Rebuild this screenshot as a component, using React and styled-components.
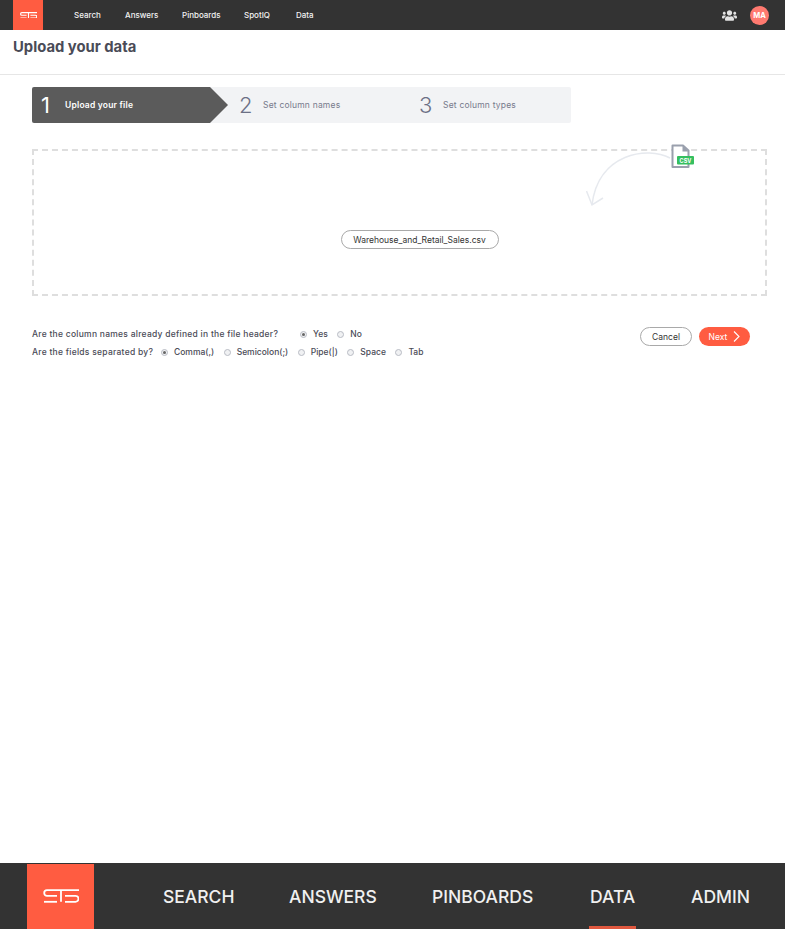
import styled, { createGlobalStyle } from "styled-components";
import { FaUsers } from "react-icons/fa";

const NAV_ITEMS = [
    { label: "Search", width: 51 },
    { label: "Answers", width: 57 },
    { label: "Pinboards", width: 62 },
    { label: "SpotIQ", width: 52 },
    { label: "Data", width: 40 },
];

const BOTTOM_ITEMS = [
    { label: "SEARCH", width: 126 },
    { label: "ANSWERS", width: 143 },
    { label: "PINBOARDS", width: 158 },
    { label: "DATA", width: 101, active: true },
    { label: "ADMIN", width: 70 },
];

const STEPS = [
    { number: 1, label: "Upload your file", width: 196, active: true },
    { number: 2, label: "Set column names", width: 180 },
    { number: 3, label: "Set column types", width: 179 },
];

const HEADER_OPTIONS = [
    { label: "Yes", checked: true },
    { label: "No" },
];

const SEPARATOR_OPTIONS = [
    { label: "Comma(,)", checked: true },
    { label: "Semicolon(;)" },
    { label: "Pipe(|)" },
    { label: "Space" },
    { label: "Tab" },
];

// logo mark, three linked strokes
const Logo = ({ width, stroke }) => (
    <svg width={width} height={width * 0.39} viewBox="0 0 36 14" fill="none" stroke="#fff" strokeWidth={stroke}>
        <path d="M36 1.200H4a2.800 2.800 0 0 0 0 5.600H14" />
        <path d="M1 12.800H14" />
        <path d="M18 1.200V12.800" />
        <path d="M22 6.800H32.500a3 3 0 0 1 0 6H22" />
    </svg>
);

const Options = ({ options }) =>
    options.map((option) => (
        <Option key={option.label}>
            <Radio $checked={option.checked} />
            {option.label}
        </Option>
    ));

const App = () => {
    return (
        <Page>
            <GlobalStyle />
            <TopBar>
                <LogoTile>
                    <Logo width={17} stroke={2.4} />
                </LogoTile>
                <TopNav>
                    {NAV_ITEMS.map((item) => (
                        <TopLink key={item.label} $width={item.width}>
                            {item.label}
                        </TopLink>
                    ))}
                </TopNav>
                <UserArea>
                    <FaUsers size={15} color="#e4e4e4" />
                    <Avatar>MA</Avatar>
                </UserArea>
            </TopBar>

            <TitleBar>
                <h1>Upload your data</h1>
            </TitleBar>

            <Main>
                <Stepper>
                    {STEPS.map((step) => (
                        <Step key={step.number} $width={step.width} $active={step.active}>
                            <StepNumber $active={step.active}>{step.number}</StepNumber>
                            <StepLabel $active={step.active}>{step.label}</StepLabel>
                        </Step>
                    ))}
                </Stepper>

                <DropZone>
                    <FilePill>Warehouse_and_Retail_Sales.csv</FilePill>
                    <DropArrow width="86" height="60" viewBox="0 0 86 60" fill="none" stroke="#e6e9ee" strokeWidth="1.500">
                        <path d="M84 9C62 -3 12 4 6 56" />
                        <path d="M.500 42L6 56L17 49" />
                    </DropArrow>
                    <FileIcon width="23" height="25" viewBox="0 0 23 25">
                        <path d="M1.500 1.500H12L17.500 6.500V23H1.500Z" fill="#fff" stroke="#9aa0ad" strokeWidth="2" strokeLinejoin="round" />
                        <path d="M11.500 1.500V7.500H17.500Z" fill="#9aa0ad" />
                        <rect x="6" y="12" width="17" height="8.500" rx="1" fill="#35bf5f" />
                        <CsvText x="14.500" y="18.500">CSV</CsvText>
                    </FileIcon>
                </DropZone>

                <FormArea>
                    <Questions>
                        <QuestionRow>
                            <QuestionText $width={268}>Are the column names already defined in the file header?</QuestionText>
                            <Options options={HEADER_OPTIONS} />
                        </QuestionRow>
                        <QuestionRow>
                            <QuestionText $width={129}>Are the fields separated by?</QuestionText>
                            <Options options={SEPARATOR_OPTIONS} />
                        </QuestionRow>
                    </Questions>
                    <Actions>
                        <CancelButton>Cancel</CancelButton>
                        <NextButton>
                            Next
                            <svg width="7" height="11" viewBox="0 0 7 11" fill="none" stroke="#fff" strokeWidth="1.100">
                                <path d="M1 .5L6 5.500L1 10.500" />
                            </svg>
                        </NextButton>
                    </Actions>
                </FormArea>
            </Main>

            <BottomBar>
                <BottomLogoTile>
                    <Logo width={36} stroke={1.8} />
                </BottomLogoTile>
                <BottomNav>
                    {BOTTOM_ITEMS.map((item) => (
                        <BottomLink key={item.label} $width={item.width} $active={item.active}>
                            {item.label}
                        </BottomLink>
                    ))}
                </BottomNav>
            </BottomBar>
        </Page>
    );
};

export default App;

const GlobalStyle = createGlobalStyle`
    * {
        box-sizing: border-box;
    }
    body {
        margin: 0;
        background-color: #fff;
        font-family: "Inter", "Liberation Sans", sans-serif;
    }
`;

const Page = styled.div`
    display: flex;
    flex-direction: column;
    height: 929px;
    overflow: hidden;
`;

const TopBar = styled.header`
    display: flex;
    align-items: center;
    height: 30px;
    padding-left: 13px;
    background-color: #333333;
`;

const LogoTile = styled.div`
    display: flex;
    align-items: center;
    justify-content: center;
    width: 30px;
    height: 30px;
    background-color: #ff5c41;
`;

const TopNav = styled.nav`
    display: flex;
    margin-left: 31px;
`;

const TopLink = styled.a`
    width: ${(props) => props.$width}px;
    color: #f2f2f2;
    font-size: 8px;
    font-weight: 500;
`;

const UserArea = styled.div`
    display: flex;
    align-items: center;
    gap: 13px;
    margin-left: auto;
    margin-right: 16px;
`;

const Avatar = styled.div`
    display: flex;
    align-items: center;
    justify-content: center;
    width: 19px;
    height: 19px;
    border-radius: 50%;
    background-color: #ff7a70;
    color: #fff;
    font-size: 7.500px;
    font-weight: 700;
`;

const TitleBar = styled.div`
    height: 45px;
    padding: 8px 13px 0;
    border-bottom: 1px solid #e6e6e6;
    h1 {
        margin: 0;
        color: #4a4b57;
        font-size: 14.800px;
        line-height: 19px;
        font-weight: 700;
    }
`;

const Main = styled.main`
    flex: 1;
    display: flex;
    flex-direction: column;
    padding: 12px 18px 0 32px;
`;

const Stepper = styled.div`
    display: flex;
    width: 539px;
    height: 36px;
    background-color: #f2f3f5;
    border-radius: 2px;
`;

const Step = styled.div`
    display: flex;
    align-items: center;
    width: ${(props) => props.$width}px;
    padding-left: ${(props) => (props.$active ? "9px" : "27px")};
    background-color: ${(props) => (props.$active ? "#5b5b5b" : "transparent")};
    clip-path: ${(props) => (props.$active ? "polygon(0 0, 178px 0, 196px 50%, 178px 100%, 0 100%)" : "none")};
    margin-right: ${(props) => (props.$active ? "-16px" : "0")};
    border-radius: ${(props) => (props.$active ? "2px" : "0")};
`;

const StepNumber = styled.span`
    width: 24px;
    color: ${(props) => (props.$active ? "#fff" : "#6c7086")};
    font-size: 22px;
    font-weight: ${(props) => (props.$active ? 400 : 300)};
`;

const StepLabel = styled.span`
    color: ${(props) => (props.$active ? "#fff" : "#777a8c")};
    font-size: 8.500px;
    font-weight: ${(props) => (props.$active ? 600 : 400)};
    letter-spacing: 0.2px;
`;

const DropZone = styled.div`
    position: relative;
    display: flex;
    align-items: center;
    justify-content: center;
    width: 735px;
    height: 147px;
    margin-top: 26px;
    padding-left: 40px;
    padding-bottom: 3px;
    border: 2px dashed #dedede;
`;

const FilePill = styled.div`
    display: flex;
    align-items: center;
    justify-content: center;
    width: 158px;
    height: 19px;
    margin-top: 37px;
    border: 1px solid #a9a9a9;
    border-radius: 10px;
    color: #333;
    font-size: 8.500px;
`;

const DropArrow = styled.svg`
    position: absolute;
    top: -2px;
    left: 552px;
`;

const FileIcon = styled.svg`
    position: absolute;
    top: -7px;
    left: 637px;
`;

const CsvText = styled.text`
    fill: #fff;
    font-size: 5.500px;
    font-weight: 700;
    text-anchor: middle;
`;

const FormArea = styled.div`
    display: flex;
    justify-content: space-between;
    margin-top: 30px;
`;

const Questions = styled.div`
    display: flex;
    flex-direction: column;
    gap: 6px;
    padding-top: 2px;
`;

const QuestionRow = styled.div`
    display: flex;
    align-items: center;
    height: 12px;
    color: #4a4b57;
    font-size: 8.500px;
    font-weight: 500;
`;

const QuestionText = styled.span`
    width: ${(props) => props.$width}px;
    letter-spacing: 0.26px;
    white-space: nowrap;
`;

const Option = styled.label`
    display: flex;
    align-items: center;
    gap: 6px;
    margin-right: 9.500px;
    white-space: nowrap;
`;

const Radio = styled.span`
    display: flex;
    align-items: center;
    justify-content: center;
    width: 7px;
    height: 7px;
    border: 1px solid #b9bcc4;
    border-radius: 50%;
    background-color: #f0f1f3;
    &::after {
        content: "";
        display: ${(props) => (props.$checked ? "block" : "none")};
        width: 3px;
        height: 3px;
        border-radius: 50%;
        background-color: #666;
    }
`;

const Actions = styled.div`
    display: flex;
    gap: 7px;
    margin-top: 1px;
    margin-right: 17px;
`;

const CancelButton = styled.button`
    width: 52px;
    height: 19px;
    padding: 0;
    border: 1px solid #a9a9a9;
    border-radius: 10px;
    background-color: #fff;
    color: #333;
    font-family: inherit;
    font-size: 8.500px;
`;

const NextButton = styled.button`
    display: flex;
    align-items: center;
    justify-content: center;
    gap: 6px;
    width: 51px;
    height: 19px;
    padding: 0;
    border: none;
    border-radius: 10px;
    background-color: #ff5c41;
    color: #fff;
    font-family: inherit;
    font-size: 8.500px;
`;

const BottomBar = styled.footer`
    display: flex;
    height: 66px;
    padding-left: 27px;
    background-color: #333333;
`;

const BottomLogoTile = styled.div`
    display: flex;
    align-items: center;
    justify-content: center;
    width: 67px;
    height: 65px;
    margin-top: 1px;
    background-color: #ff5c41;
`;

const BottomNav = styled.nav`
    display: flex;
    margin-left: 69px;
`;

const BottomLink = styled.a`
    position: relative;
    display: flex;
    align-items: center;
    width: ${(props) => props.$width}px;
    color: #f0f0f0;
    font-size: 17.500px;
    font-weight: 500;
    &::after {
        content: "";
        display: ${(props) => (props.$active ? "block" : "none")};
        position: absolute;
        left: -1px;
        bottom: 0;
        width: 47px;
        height: 3px;
        background-color: #e0583f;
    }
`;
